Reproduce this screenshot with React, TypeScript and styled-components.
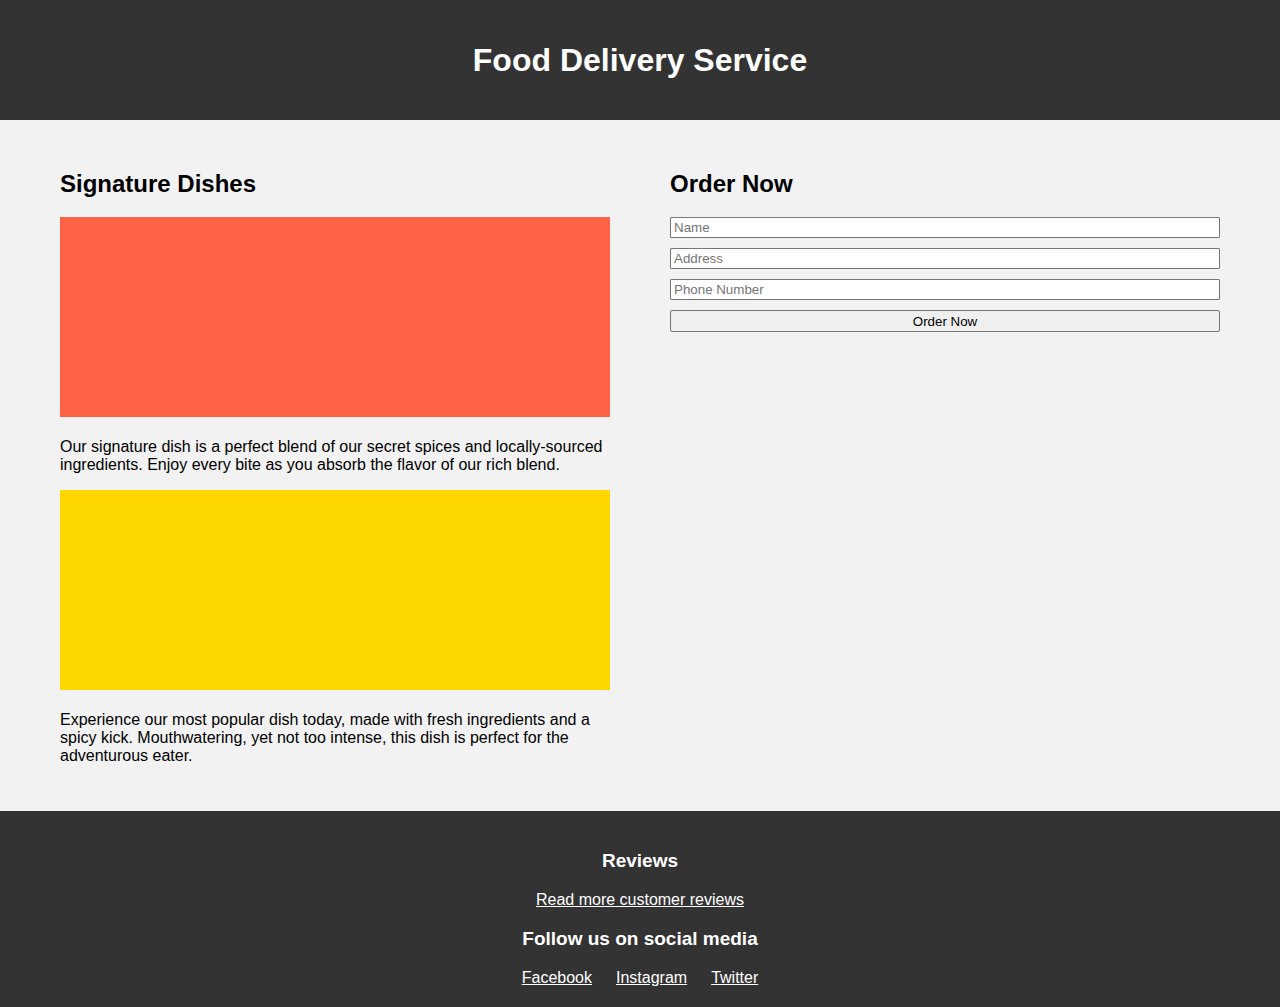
import React from "react";
import styled, { createGlobalStyle } from "styled-components";

const GlobalStyle = createGlobalStyle`
  body {
    margin: 0;
    background: #f2f2f2;
    font-family: "Liberation Sans", Arial, sans-serif;
    font-size: 16px;
    line-height: 18px;
  }
`;

const Header = styled.header`
  background: #333;
  color: #fff;
  padding: 20px;
  text-align: center;
`;

const Title = styled.h1`
  font-size: 32px;
  line-height: 36px;
  margin: 22px 0;
`;

const Main = styled.main`
  display: grid;
  grid-template-columns: repeat(2, 1fr);
  padding: 30px;
`;

const Section = styled.section`
  padding: 0 30px;
`;

const SectionTitle = styled.h2`
  font-size: 24px;
  line-height: 27px;
  margin: 20px 0;
`;

const DishImage = styled.div<{ $color: string }>`
  height: 200px;
  margin-bottom: 21px;
  background: ${({ $color }) => $color};
`;

const DishText = styled.p`
  margin: 0 0 16px;
`;

const Form = styled.form`
  display: flex;
  flex-direction: column;
  gap: 10px;
`;

const Field = styled.input`
  border: 1px solid #767676;
  border-radius: 1px;
  padding: 2px 3px;
  background: #fff;
`;

const SubmitButton = styled.button`
  height: 22px;
  padding: 1px 6px;
  border: 1px solid #767676;
  border-radius: 2px;
  background: #efefef;
  color: #000;
`;

const Footer = styled.footer`
  background: #333;
  color: #fff;
  padding: 20px;
  text-align: center;
`;

const FooterTitle = styled.h3`
  font-size: 19px;
  line-height: 22px;
  margin: 19px 0;
`;

const FooterLink = styled.a`
  color: #fff;
`;

const SocialLinks = styled.nav`
  display: flex;
  justify-content: center;
  gap: 24px;
`;

const dishes = [
  {
    color: "#ff6347",
    text: "Our signature dish is a perfect blend of our secret spices and locally-sourced ingredients. Enjoy every bite as you absorb the flavor of our rich blend.",
  },
  {
    color: "#ffd700",
    text: "Experience our most popular dish today, made with fresh ingredients and a spicy kick. Mouthwatering, yet not too intense, this dish is perfect for the adventurous eater.",
  },
];

const fields = [
  { name: "name", label: "Name", type: "text" },
  { name: "address", label: "Address", type: "text" },
  { name: "phone", label: "Phone Number", type: "tel" },
];

export default function App() {
  return (
    <>
      <GlobalStyle />
      <Header>
        <Title>Food Delivery Service</Title>
      </Header>
      <Main>
        <Section>
          <SectionTitle>Signature Dishes</SectionTitle>
          {dishes.map((dish) => (
            <article key={dish.color}>
              <DishImage $color={dish.color} />
              <DishText>{dish.text}</DishText>
            </article>
          ))}
        </Section>
        <Section>
          <SectionTitle>Order Now</SectionTitle>
          <Form onSubmit={(event) => event.preventDefault()}>
            {fields.map((field) => (
              <Field
                key={field.name}
                type={field.type}
                name={field.name}
                placeholder={field.label}
                aria-label={field.label}
              />
            ))}
            <SubmitButton type="submit">Order Now</SubmitButton>
          </Form>
        </Section>
      </Main>
      <Footer>
        <FooterTitle>Reviews</FooterTitle>
        <FooterLink href="#reviews">Read more customer reviews</FooterLink>
        <FooterTitle>Follow us on social media</FooterTitle>
        <SocialLinks>
          <FooterLink href="#facebook">Facebook</FooterLink>
          <FooterLink href="#instagram">Instagram</FooterLink>
          <FooterLink href="#twitter">Twitter</FooterLink>
        </SocialLinks>
      </Footer>
    </>
  );
}
